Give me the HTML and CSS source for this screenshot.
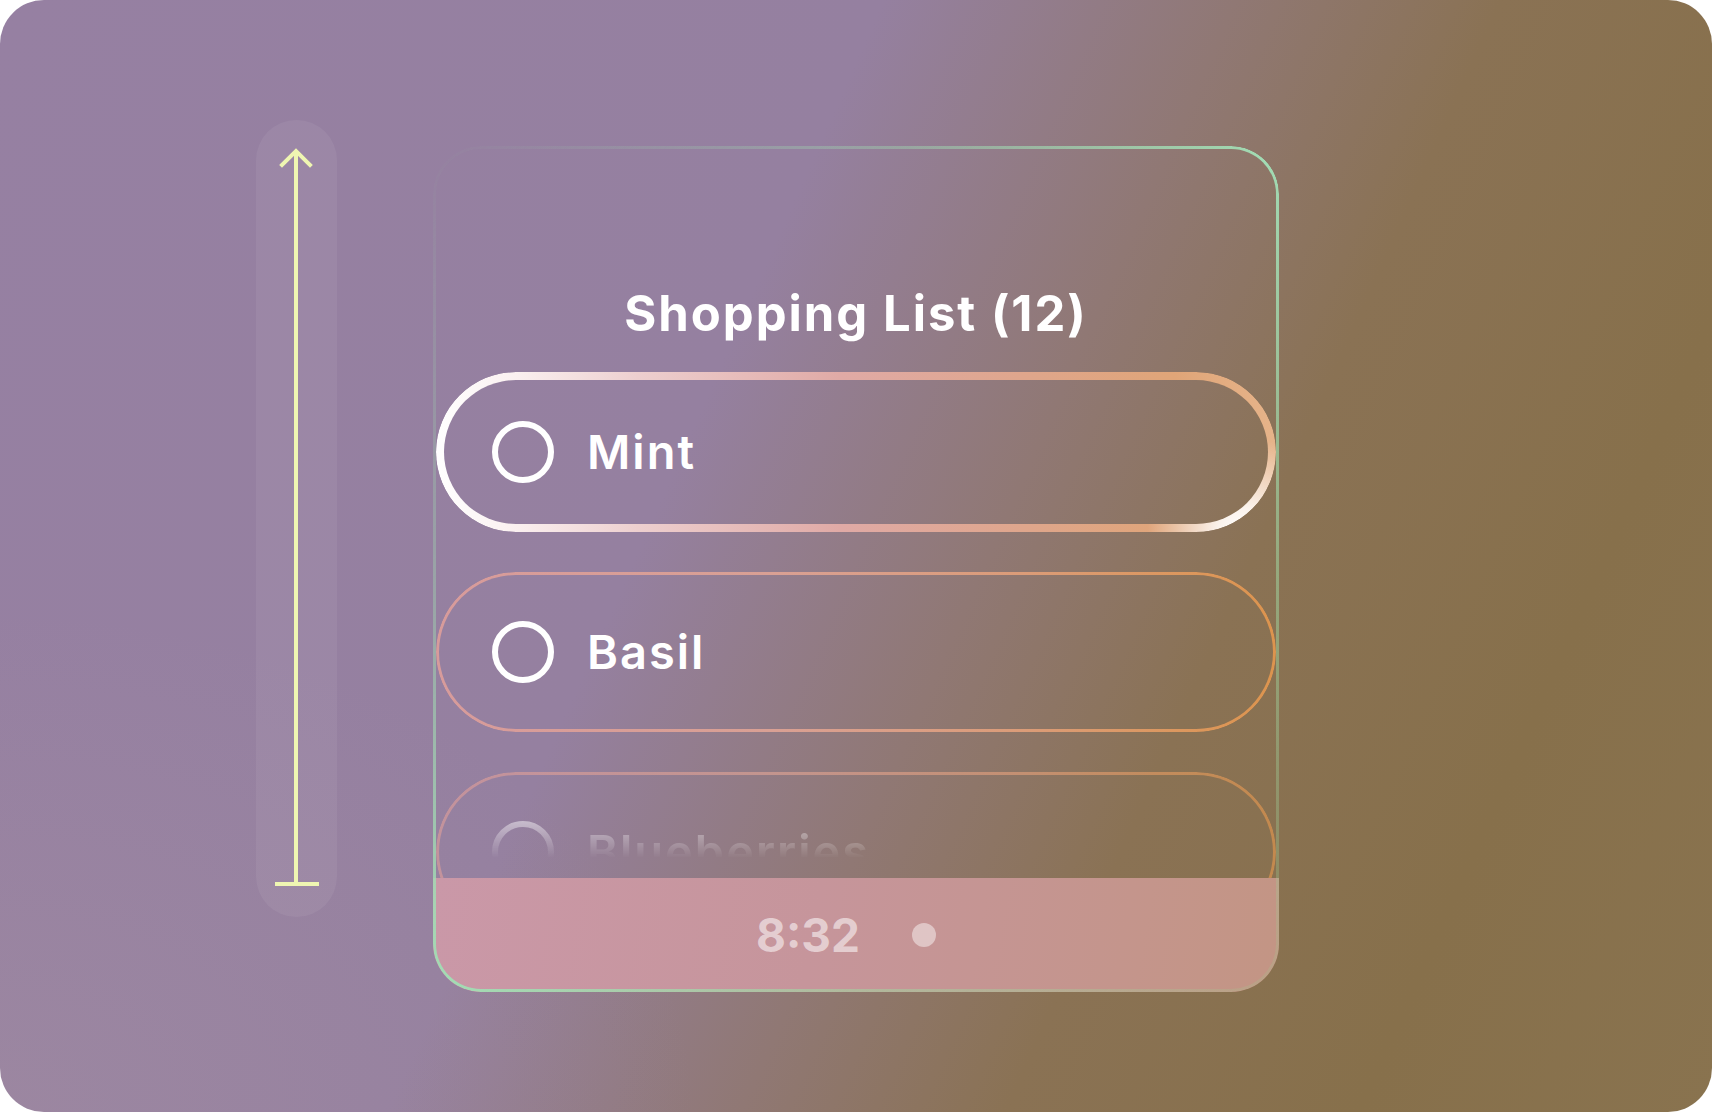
FILE: index.html
```html
<!DOCTYPE html>
<html lang="en">
<head>
<meta charset="utf-8">
<title>Shopping List</title>
<link rel="stylesheet" href="styles.css">
</head>
<body>
<div class="stage">
  <div class="track">
    <svg class="track-arrow" width="81" height="797" viewBox="0 0 81 797" fill="none" stroke="#eff6b2" stroke-width="4">
      <line x1="40" y1="31" x2="40" y2="764"/>
      <polyline points="26,45 40,31 54,45" stroke-linecap="square"/>
      <line x1="19" y1="764" x2="63" y2="764"/>
    </svg>
  </div>
  <div class="card">
    <div class="card-head"><h1 class="title">Shopping List (12)</h1></div>
    <div class="list">
      <div class="item item-active">
        <div class="item-content"><span class="check"></span><span class="label">Mint</span></div>
      </div>
      <div class="item">
        <div class="item-content"><span class="check"></span><span class="label">Basil</span></div>
      </div>
      <div class="item item-faded">
        <div class="item-content"><span class="check"></span><span class="label">Blueberries</span></div>
      </div>
    </div>
    <div class="footer"><span class="time">8:32</span><span class="dot"></span></div>
  </div>
</div>
</body>
</html>
```

FILE: styles.css
```css
html, body {
  margin: 0;
  padding: 0;
  background: #ffffff;
}

.stage {
  box-sizing: border-box;
  width: 1712px;
  height: 1112px;
  border-radius: 44px;
  overflow: hidden;
  display: flex;
  align-items: flex-start;
  gap: 96px;
  padding-left: 256px;
  font-family: "Inter", "Lato", sans-serif;
  background:
    radial-gradient(ellipse 700px 500px at 0% 100%, rgba(170, 150, 160, 0.3), rgba(170, 150, 160, 0) 100%),
    linear-gradient(114deg, #9680a2 0%, #9580a0 40%, #907874 56%, #8a7254 68%, #87704b 84%, #89734f 100%);
}

.track {
  flex: none;
  width: 81px;
  height: 797px;
  margin-top: 120px;
  border-radius: 41px;
  background: rgba(255, 255, 255, 0.06);
}

.track-arrow {
  display: block;
}

.card {
  position: relative;
  flex: none;
  width: 846px;
  height: 846px;
  margin-top: 146px;
  border-radius: 48px;
  overflow: hidden;
  display: flex;
  flex-direction: column;
}

.card::after {
  content: "";
  position: absolute;
  inset: 0;
  border-radius: inherit;
  padding: 3px;
  background: linear-gradient(to bottom right,
    rgba(160, 220, 176, 0) 0%,
    rgba(160, 214, 176, 0.45) 28%,
    #a2dcb4 50%,
    rgba(160, 214, 160, 0.55) 75%,
    rgba(160, 200, 140, 0.2) 100%);
  -webkit-mask: linear-gradient(#000 0 0) content-box, linear-gradient(#000 0 0);
  -webkit-mask-composite: xor;
  mask: linear-gradient(#000 0 0) content-box exclude, linear-gradient(#000 0 0);
  pointer-events: none;
}

.card-head {
  flex: none;
  height: 226px;
  box-sizing: border-box;
  display: flex;
  align-items: flex-end;
  justify-content: center;
  padding-bottom: 30px;
}

.title {
  margin: 0;
  color: #ffffff;
  font-size: 49px;
  line-height: 56px;
  font-weight: 700;
  letter-spacing: 2px;
}

.list {
  flex: 1;
  min-height: 0;
  overflow: hidden;
  display: flex;
  flex-direction: column;
  gap: 40px;
  padding: 0 3px;
}

.item {
  position: relative;
  flex: none;
  height: 160px;
  border-radius: 80px;
}

.item::before {
  content: "";
  position: absolute;
  inset: 0;
  border-radius: inherit;
  padding: 3px;
  background: linear-gradient(90deg, #d79b9b 0%, #d9a094 40%, #db9c78 70%, #dc944e 100%);
  -webkit-mask: linear-gradient(#000 0 0) content-box, linear-gradient(#000 0 0);
  -webkit-mask-composite: xor;
  mask: linear-gradient(#000 0 0) content-box exclude, linear-gradient(#000 0 0);
}

.item-active::before {
  padding: 8px;
  background:
    radial-gradient(circle at 96% 100%, #ffffff 0, rgba(255, 255, 255, 0.85) 24px, rgba(255, 255, 255, 0) 95px),
    linear-gradient(90deg, #ffffff 0%, #fbf1f1 9%, #edcfcf 24%, #e0aaa6 48%, #dfa68c 70%, #e0a578 88%, #e6b48a 100%);
}

.item-faded {
  opacity: 0.7;
}

.item-content {
  height: 100%;
  display: flex;
  align-items: center;
  gap: 33px;
  padding-left: 56px;
}

.item-faded .item-content {
  -webkit-mask-image: linear-gradient(to bottom, rgba(0, 0, 0, 0.75) 45px, rgba(0, 0, 0, 0) 86px);
  mask-image: linear-gradient(to bottom, rgba(0, 0, 0, 0.75) 45px, rgba(0, 0, 0, 0) 86px);
}

.check {
  flex: none;
  box-sizing: border-box;
  width: 62px;
  height: 62px;
  border: 6px solid #ffffff;
  border-radius: 50%;
}

.label {
  color: #ffffff;
  font-size: 47px;
  line-height: 56px;
  font-weight: 600;
  letter-spacing: 2px;
}

.footer {
  flex: none;
  height: 114px;
  box-sizing: border-box;
  display: flex;
  align-items: center;
  justify-content: center;
  gap: 52px;
  padding-right: 20px;
  background: linear-gradient(100deg, #ca98a8 0%, #c6959b 45%, #c39584 100%);
}

.time {
  color: rgba(255, 255, 255, 0.55);
  font-size: 46px;
  line-height: 56px;
  font-weight: 700;
}

.dot {
  width: 24px;
  height: 24px;
  border-radius: 50%;
  background: rgba(255, 255, 255, 0.45);
}
```
